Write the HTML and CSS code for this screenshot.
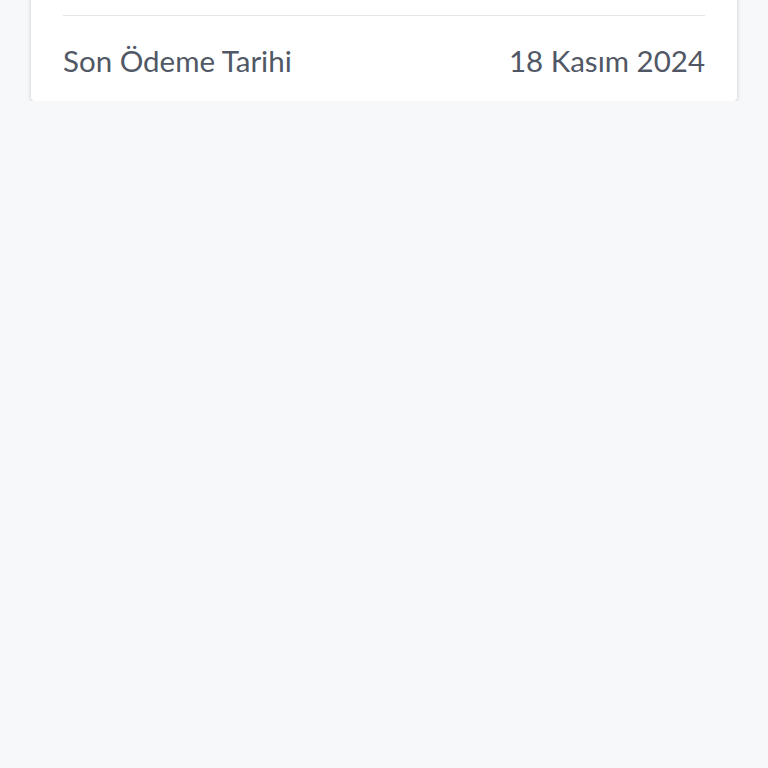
FILE: index.html
```html
<!DOCTYPE html>
<html lang="tr">
<head>
  <meta charset="UTF-8">
  <meta name="viewport" content="width=device-width, initial-scale=1.0">
  <title>Fatura Detayı</title>
  <link rel="stylesheet" href="styles.css">
</head>
<body>
  <div class="card">
    <div class="row">
      <span class="label">Son Ödeme Tarihi</span>
      <span class="value">18 Kasım 2024</span>
    </div>
  </div>
</body>
</html>
```

FILE: styles.css
```css
body {
  font-family: 'Lato', 'Noto Sans', sans-serif;
  background-color: #f7f8fa;
  margin: 0;
  padding: 0;
  color: #515865;
}

.card {
  background-color: #ffffff;
  margin: -10px 31px 0;
  padding: 25px 32px 0;
  border-radius: 4px;
  box-shadow: 0 1px 4px rgba(0, 0, 0, 0.2);
}

.row {
  display: flex;
  justify-content: space-between;
  align-items: center;
  box-sizing: border-box;
  height: 86px;
  padding-top: 3px;
  font-size: 29.5px;
  border-top: 1px solid #e3e5e9;
}
```
